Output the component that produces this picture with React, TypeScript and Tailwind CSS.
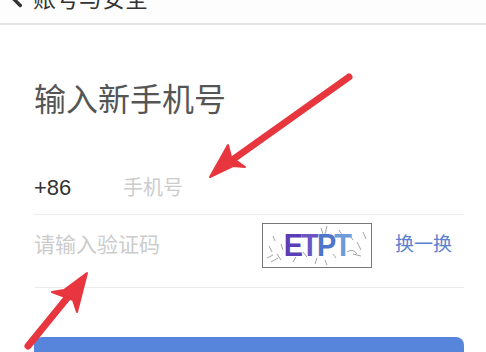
import React from 'react';
import { ChevronLeft } from 'lucide-react';

const font = "font-['Liberation_Sans','Noto_Sans_CJK_SC',sans-serif]";

const Captcha = () => (
  <div className="relative w-[110px] h-[45px] border border-[#777] bg-white flex items-center justify-center overflow-hidden">
    <svg className="absolute inset-0" width="110" height="45" viewBox="0 0 110 45">
      <g stroke="#8a8a8a" strokeWidth="0.8" fill="none">
        <path d="M6 22 l3 6 M10 12 l2 5 M4 34 l6 -3 M8 38 l7 -4 M14 30 l4 6 M18 20 l2 6" />
        <path d="M30 38 l3 -5 M40 28 l4 5 M52 40 l2 -6 M58 4 l2 6 M64 2 l-2 8" />
        <path d="M76 6 l4 6 M86 10 l4 6 M94 18 l4 8 M100 8 l3 7 M84 28 q6 -4 10 2 M90 30 l8 2" />
        <path d="M62 36 l2 5 M70 30 l3 4" />
      </g>
    </svg>
    <span className="relative text-[32px] font-bold tracking-[-2px] leading-none font-['Liberation_Sans',sans-serif] scale-x-90">
      <span className="text-[#5b3db5]">E</span>
      <span className="text-[#6a55c2]">T</span>
      <span className="text-[#4f74cb]">P</span>
      <span className="text-[#6d9ad9]">T</span>
    </span>
  </div>
);

const App = () => {
  return (
    <div className={`relative w-[486px] h-[352px] overflow-hidden bg-white ${font}`}>
      <header className="-mt-[25px] h-[50px] flex items-center pl-[4px] bg-[#fdfdfd] border-b-2 border-[#e4e4e4]">
        <ChevronLeft className="w-[26px] h-[26px] text-[#333]" strokeWidth={3.2} />
        <span className="ml-[3px] text-[23px] text-[#333]">账号与安全</span>
      </header>

      <main className="pl-[34px] pr-[22px]">
        <h1 className="mt-[59px] text-[32px] leading-none text-[#555]">输入新手机号</h1>

        <div className="mt-[45px] h-[54px] flex items-center border-b border-[#ececec]">
          <span className="w-[89px] text-[22px] text-[#333]">+86</span>
          <span className="text-[20px] text-[#cccccc]">手机号</span>
        </div>

        <div className="h-[73px] pb-[12px] flex items-center border-b border-[#ececec]">
          <span className="flex-1 text-[21px] text-[#cccccc]">请输入验证码</span>
          <Captcha />
          <span className="ml-[23px] mr-[12px] text-[19px] text-[#5b7fd1]">换一换</span>
        </div>

        <button className="mt-[49px] w-full h-[50px] rounded-lg bg-[#5885dc]" />
      </main>

      <svg className="absolute inset-0 pointer-events-none" width="486" height="352" viewBox="0 0 486 352">
        <g stroke="#e8363f" strokeWidth="7" strokeLinecap="round" fill="#e8363f">
          <line x1="349" y1="77" x2="228" y2="163" />
          <line x1="28" y1="346" x2="72" y2="292" />
        </g>
        <g fill="#e8363f" stroke="#e8363f" strokeWidth="2" strokeLinejoin="round">
          <polygon points="210,177 228,145 231,157 245,167 233,166" />
          <polygon points="87,273 77,312 73,300 52,292 64,290" />
        </g>
      </svg>
    </div>
  );
};

export default App;
